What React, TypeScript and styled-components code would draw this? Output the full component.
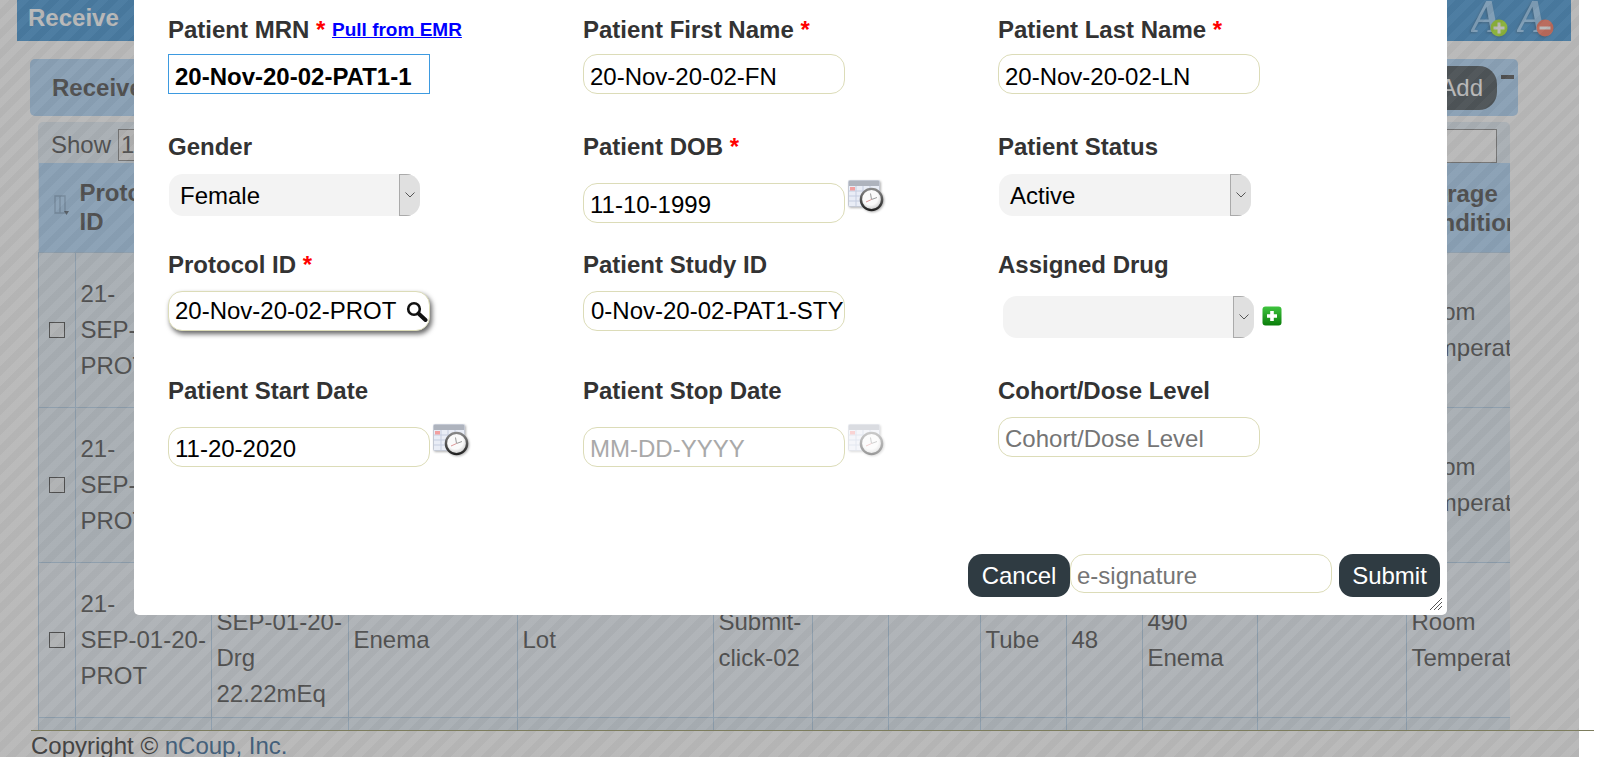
import React from "react";
import styled, { createGlobalStyle } from "styled-components";

const GlobalStyle = createGlobalStyle`
  html, body {
    margin: 0;
    padding: 0;
    background: #fff;
    overflow: hidden;
  }
  body, input, button {
    font-family: "Liberation Sans", Arial, sans-serif;
    font-size: 24px;
  }
  * {
    box-sizing: border-box;
  }
`;

const Page = styled.div`
  position: relative;
  width: 1600px;
  height: 757px;
  overflow: hidden;
  display: flex;
  flex-direction: column;
  color: #333;
`;

const Main = styled.div`
  flex: 1;
  min-height: 0;
  overflow: hidden;
`;

const HeaderBar = styled.div`
  margin-left: 17px;
  width: 1554px;
  height: 41px;
  padding: 0 17px 6px 11px;
  display: flex;
  align-items: center;
  justify-content: space-between;
  background: #2585cf;
  color: #fff;
  font-weight: bold;
`;

const FontIcons = styled.div`
  display: flex;
  gap: 9px;
  margin-top: 3px;
`;

const FontIconSvg = styled.svg`
  filter: drop-shadow(-1px 1px 1px rgba(0, 0, 0, 0.3));
`;

const TabBar = styled.div`
  margin: 18px 0 6px 30px;
  width: 1488px;
  height: 57px;
  padding: 0 4px 0 22px;
  display: flex;
  align-items: center;
  justify-content: space-between;
  border-radius: 5px;
  background: #a4d0f8;
  font-weight: bold;
`;

const TabActions = styled.div`
  display: flex;
  align-items: flex-start;
  gap: 4px;
`;

const AddButton = styled.button`
  width: 80px;
  height: 44px;
  padding: 0 14px 0 0;
  border: 0;
  border-radius: 18px;
  background: #2f3b42;
  color: #fff;
  text-align: right;
`;

const Collapse = styled.span`
  display: block;
  width: 13px;
  height: 4px;
  margin-top: 9px;
  background: #333;
`;

const TableWrap = styled.div`
  margin-left: 38px;
  width: 1472px;
  border-radius: 5px 5px 0 0;
  overflow: hidden;
  background: #e0ecf6;
`;

const Controls = styled.div`
  height: 41px;
  padding: 7px 13px 0 13px;
  display: flex;
  align-items: flex-start;
  justify-content: space-between;
`;

const ShowLabel = styled.div`
  display: flex;
  align-items: flex-start;
  gap: 7px;
  line-height: 31px;
`;

const PageSize = styled.span`
  display: block;
  width: 70px;
  height: 32px;
  padding-left: 2px;
  border: 1px solid #777;
  background: #eee;
  line-height: 30px;
`;

const SearchField = styled.span`
  display: block;
  width: 220px;
  height: 34px;
  border: 1px solid #777;
  background: #fff;
`;

const Table = styled.table`
  width: 1472px;
  table-layout: fixed;
  border-collapse: collapse;
`;

const HeadCell = styled.th`
  height: 89px;
  padding: 0 4px;
  background: #a4d0f8;
  font-weight: bold;
  text-align: left;
  line-height: 29px;
  overflow: hidden;
  white-space: pre;
`;

const SortCell = styled(HeadCell)`
  padding: 0 0 0 15px;
`;

const StorageHead = styled(HeadCell)`
  padding: 1px 0 0 2px;
`;

const Row = styled.tr<{ $light?: boolean }>`
  background: ${p => (p.$light ? "#ebf3fb" : "#e0ecf6")};
`;

const Cell = styled.td`
  padding: 5px 4px 5px 4.5px;
  border: 1px solid #a8c8e4;
  line-height: 36px;
  overflow: hidden;
  white-space: pre;
`;

const CheckCell = styled(Cell)`
  padding: 5px 0 5px 10px;
`;

const Checkbox = styled.span`
  display: block;
  width: 16px;
  height: 16px;
  border: 1px solid #333;
  background: #eef2f5;
`;

const Footer = styled.div`
  position: relative;
  z-index: 2;
  margin-left: 31px;
  width: 1563px;
  height: 27px;
  border-top: 1px solid #7d7d5e;
  padding-top: 1px;
  color: #444;
  line-height: 27px;
`;

const FooterLink = styled.span`
  color: #44607a;
`;

const Overlay = styled.div`
  position: absolute;
  top: 0;
  left: 0;
  z-index: 1;
  width: 1579px;
  height: 757px;
  background: repeating-linear-gradient(
    135deg,
    rgba(118, 118, 118, 0.5) 0 7px,
    rgba(106, 106, 106, 0.5) 7px 14px
  );
`;

const Modal = styled.div`
  position: absolute;
  top: 0;
  left: 134px;
  z-index: 2;
  width: 1313px;
  height: 615px;
  display: flex;
  flex-direction: column;
  border-radius: 0 0 5px 5px;
  background: #fff;
`;

const FormGrid = styled.div`
  padding: 15px 0 0 34px;
  display: grid;
  grid-template-columns: repeat(3, 415px);
  grid-template-rows: 117px 118px 126px 100px;
`;

const Field = styled.div`
  display: flex;
  flex-direction: column;
  align-items: flex-start;
`;

const Label = styled.label`
  height: 30px;
  font-weight: bold;
  line-height: 30px;
  white-space: nowrap;
`;

const Required = styled.span`
  color: #f00;
`;

const EmrLink = styled.a`
  color: #00f;
  font-size: 19px;
  text-decoration: underline;
  vertical-align: 2px;
`;

const TextInput = styled.input<{
  $top?: number;
  $shift?: number;
  $focused?: boolean;
  $muted?: boolean;
}>`
  display: block;
  width: 262px;
  height: 40px;
  margin-top: ${p => p.$top ?? 0}px;
  padding: ${p => p.$shift ?? 0}px 6px 0;
  border: 1px solid ${p => (p.$focused ? "#3d9ae0" : "#dcdcb8")};
  border-radius: ${p => (p.$focused ? 0 : 14)}px;
  outline: none;
  background: #fff;
  color: #000;
  font-weight: ${p => (p.$focused ? "bold" : "normal")};

  &::placeholder {
    color: ${p => (p.$muted ? "#a9a9a9" : "#757575")};
    opacity: 1;
  }
`;

const ScrolledInput = styled(TextInput)`
  padding-left: 7px;
  padding-right: 0;
`;

const DateRow = styled.div<{ $top: number }>`
  margin-top: ${p => p.$top}px;
  display: flex;
  align-items: flex-start;
  gap: 3px;
`;

const CalendarSvg = styled.svg<{ $faded?: boolean }>`
  margin-top: -3px;
  opacity: ${p => (p.$faded ? 0.45 : 1)};
  filter: drop-shadow(1px 1px 1px rgba(0, 0, 0, 0.3));
`;

const SearchBox = styled.div`
  width: 262px;
  height: 40px;
  margin-top: 11px;
  padding: 0 1px 0 6px;
  display: flex;
  align-items: center;
  justify-content: space-between;
  border: 1px solid #dcdcb8;
  border-radius: 14px;
  background: #fff;
  box-shadow: 2px 3px 5px #666;
  color: #000;
`;

const SelectRow = styled.div<{ $top: number; $left: number }>`
  margin: ${p => p.$top}px 0 0 ${p => p.$left}px;
  display: flex;
  align-items: center;
  gap: 8px;
`;

const SelectBox = styled.div<{ $width: number }>`
  width: ${p => p.$width}px;
  height: 42px;
  display: flex;
  border-radius: 14px;
  overflow: hidden;
  background: #f3f3f3;
  color: #000;
  line-height: 44px;
`;

const SelectValue = styled.span`
  flex: 1;
  padding-left: 11px;
`;

const SelectArrow = styled.span`
  width: 21px;
  display: flex;
  align-items: center;
  justify-content: center;
  border: 1px solid #aaa;
  border-right: 0;
  background: #e0e0e0;
`;

const AddDrugSvg = styled.svg`
  margin-top: -2px;
`;

const ModalFooter = styled.div`
  margin-top: auto;
  position: relative;
  height: 61px;
  padding-right: 7px;
  display: flex;
  align-items: flex-start;
  justify-content: flex-end;
`;

const DarkButton = styled.button`
  width: 101px;
  height: 43px;
  padding: 0;
  border: 0;
  border-radius: 14px;
  background: #2f3b42;
  color: #fff;
`;

const CancelButton = styled(DarkButton)`
  width: 102px;
`;

const SignatureInput = styled(TextInput)`
  margin-right: 7px;
  height: 39px;
`;

const ResizeGrip = styled.svg`
  position: absolute;
  right: 4px;
  bottom: 4px;
`;

const Chevron = () => (
  <svg width="10" height="6" viewBox="0 0 10 6">
    <path d="M0.5 0.5 L5 5 L9.5 0.5" fill="none" stroke="#555" strokeWidth="1" />
  </svg>
);

const Calendar = ({ faded }: { faded?: boolean }) => (
  <CalendarSvg $faded={faded} width="36" height="32" viewBox="0 0 36 32">
    <defs>
      <radialGradient id="clockFace" cx="0.45" cy="0.4" r="0.65">
        <stop offset="0.55" stopColor="#fafafa" />
        <stop offset="1" stopColor="#bdbdbd" />
      </radialGradient>
      <linearGradient id="clockRim" x1="0" y1="0" x2="0" y2="1">
        <stop offset="0" stopColor="#888" />
        <stop offset="1" stopColor="#222" />
      </linearGradient>
    </defs>
    <rect x="0.5" y="0.5" width="31" height="26" rx="1" fill="#e9edf6" stroke="#c4c9d4" />
    <rect x="1" y="1" width="30" height="5" fill="#aeb3bd" />
    <path
      d="M1 11 H31 M1 16 H31 M1 21 H31 M8 6 V26 M15 6 V26 M22 6 V26"
      stroke="#c5cde0"
      strokeWidth="1"
    />
    <rect x="2" y="7" width="5" height="3.5" fill="#f2a0a0" />
    <circle
      cx="23.5"
      cy="19.5"
      r="10.6"
      fill="url(#clockFace)"
      stroke="url(#clockRim)"
      strokeWidth="2.4"
    />
    <path d="M23.5 19.5 L22.5 13.5 M23.5 19.5 L29 17.5" stroke="#999" strokeWidth="1" />
    <path d="M23.5 19.5 L18 22" stroke="#d99" strokeWidth="1" />
  </CalendarSvg>
);

const Magnifier = () => (
  <svg width="22" height="21" viewBox="0 0 22 21">
    <circle cx="8" cy="8" r="5.8" fill="#fff" stroke="#111" strokeWidth="2.6" />
    <path d="M12.5 12.5 L19.5 19" stroke="#111" strokeWidth="4" strokeLinecap="round" />
  </svg>
);

const AddDrugIcon = () => (
  <AddDrugSvg width="20" height="20" viewBox="0 0 20 20">
    <defs>
      <linearGradient id="addGreen" x1="0" y1="0" x2="0" y2="1">
        <stop offset="0" stopColor="#3fc43f" />
        <stop offset="1" stopColor="#0a7d0a" />
      </linearGradient>
    </defs>
    <rect x="0.5" y="0.5" width="19" height="19" rx="3" fill="url(#addGreen)" />
    <path d="M10 5 V15 M5 10 H15" stroke="#fff" strokeWidth="3.6" />
  </AddDrugSvg>
);

const FontSizeIcon = ({ plus }: { plus?: boolean }) => (
  <FontIconSvg width="37" height="36" viewBox="0 0 37 36">
    <text
      x="0"
      y="31"
      fill="#8cc8f8"
      fontFamily="Liberation Serif, serif"
      fontSize="46"
      fontStyle="italic"
    >
      A
    </text>
    <circle cx="28" cy="27" r="8.5" fill={plus ? "#a4ee08" : "#ff6448"} />
    <path
      d={plus ? "M22.5 27 H33.5 M28 21.5 V32.5" : "M22.5 27 H33.5"}
      stroke="#fff"
      strokeWidth="3"
    />
  </FontIconSvg>
);

const SortIcon = () => (
  <svg width="16" height="21" viewBox="0 0 16 21">
    <path d="M1 1 H11 V18 H1 Z M6 1 V18" fill="none" stroke="#7aa0c4" strokeWidth="1.4" />
    <path d="M10 16 H15 L12.5 20 Z" fill="#3a4a5a" />
  </svg>
);

const columns = [37, 136, 137, 169, 196, 99, 76, 92, 86, 76, 115, 149, 104];

const rowCells = [
  "21-\nSEP-01-20-\nPROT",
  "21-\nSEP-01-20-\nDrg\n22.22mEq",
  "Enema",
  "Lot",
  "Submit-\nclick-02",
  "",
  "",
  "Tube",
  "48",
  "490\nEnema",
  "",
  "Room\nTemperature",
];

const rows = [false, false, true, false];

const App = () => (
  <Page>
    <GlobalStyle />
    <Main>
      <HeaderBar>
        Receive
        <FontIcons>
          <FontSizeIcon plus />
          <FontSizeIcon />
        </FontIcons>
      </HeaderBar>
      <TabBar>
        Receive
        <TabActions>
          <AddButton>Add</AddButton>
          <Collapse />
        </TabActions>
      </TabBar>
      <TableWrap>
        <Controls>
          <ShowLabel>
            Show
            <PageSize>10</PageSize>
          </ShowLabel>
          <SearchField />
        </Controls>
        <Table>
          <colgroup>
            {columns.map((width, i) => (
              <col key={i} width={width} />
            ))}
          </colgroup>
          <thead>
            <tr>
              <SortCell>
                <SortIcon />
              </SortCell>
              <HeadCell>{"Protocol\nID"}</HeadCell>
              {rowCells.slice(1, -1).map((_, i) => (
                <HeadCell key={i} />
              ))}
              <StorageHead>{"Storage\nCondition"}</StorageHead>
            </tr>
          </thead>
          <tbody>
            {rows.map((light, r) => (
              <Row key={r} $light={light}>
                <CheckCell>
                  <Checkbox />
                </CheckCell>
                {rowCells.map((text, i) => (
                  <Cell key={i}>{text}</Cell>
                ))}
              </Row>
            ))}
          </tbody>
        </Table>
      </TableWrap>
    </Main>
    <Footer>
      Copyright © <FooterLink>nCoup, Inc.</FooterLink>
    </Footer>
    <Overlay />
    <Modal>
      <FormGrid>
        <Field>
          <Label>
            Patient MRN <Required>*</Required> <EmrLink>Pull from EMR</EmrLink>
          </Label>
          <TextInput $top={9} $shift={6} $focused readOnly value="20-Nov-20-02-PAT1-1" />
        </Field>
        <Field>
          <Label>
            Patient First Name <Required>*</Required>
          </Label>
          <TextInput $top={9} $shift={6} readOnly value="20-Nov-20-02-FN" />
        </Field>
        <Field>
          <Label>
            Patient Last Name <Required>*</Required>
          </Label>
          <TextInput $top={9} $shift={6} readOnly value="20-Nov-20-02-LN" />
        </Field>

        <Field>
          <Label>Gender</Label>
          <SelectRow $top={12} $left={1}>
            <SelectBox $width={251}>
              <SelectValue>Female</SelectValue>
              <SelectArrow>
                <Chevron />
              </SelectArrow>
            </SelectBox>
          </SelectRow>
        </Field>
        <Field>
          <Label>
            Patient DOB <Required>*</Required>
          </Label>
          <DateRow $top={21}>
            <TextInput $shift={4} readOnly value="11-10-1999" />
            <Calendar />
          </DateRow>
        </Field>
        <Field>
          <Label>Patient Status</Label>
          <SelectRow $top={12} $left={1}>
            <SelectBox $width={252}>
              <SelectValue>Active</SelectValue>
              <SelectArrow>
                <Chevron />
              </SelectArrow>
            </SelectBox>
          </SelectRow>
        </Field>

        <Field>
          <Label>
            Protocol ID <Required>*</Required>
          </Label>
          <SearchBox>
            20-Nov-20-02-PROT
            <Magnifier />
          </SearchBox>
        </Field>
        <Field>
          <Label>Patient Study ID</Label>
          <ScrolledInput $top={11} readOnly value="0-Nov-20-02-PAT1-STY" />
        </Field>
        <Field>
          <Label>Assigned Drug</Label>
          <SelectRow $top={16} $left={5}>
            <SelectBox $width={251}>
              <SelectValue />
              <SelectArrow>
                <Chevron />
              </SelectArrow>
            </SelectBox>
            <AddDrugIcon />
          </SelectRow>
        </Field>

        <Field>
          <Label>Patient Start Date</Label>
          <DateRow $top={21}>
            <TextInput $shift={4} readOnly value="11-20-2020" />
            <Calendar />
          </DateRow>
        </Field>
        <Field>
          <Label>Patient Stop Date</Label>
          <DateRow $top={21}>
            <TextInput $shift={4} $muted readOnly placeholder="MM-DD-YYYY" />
            <Calendar faded />
          </DateRow>
        </Field>
        <Field>
          <Label>Cohort/Dose Level</Label>
          <TextInput $top={11} $shift={4} readOnly placeholder="Cohort/Dose Level" />
        </Field>
      </FormGrid>
      <ModalFooter>
        <CancelButton>Cancel</CancelButton>
        <SignatureInput $shift={5} readOnly placeholder="e-signature" />
        <DarkButton>Submit</DarkButton>
        <ResizeGrip width="14" height="14" viewBox="0 0 14 14">
          <path d="M1 13 L13 1 M5 13 L13 5 M9 13 L13 9" stroke="#555" strokeWidth="1" />
        </ResizeGrip>
      </ModalFooter>
    </Modal>
  </Page>
);

export default App;
